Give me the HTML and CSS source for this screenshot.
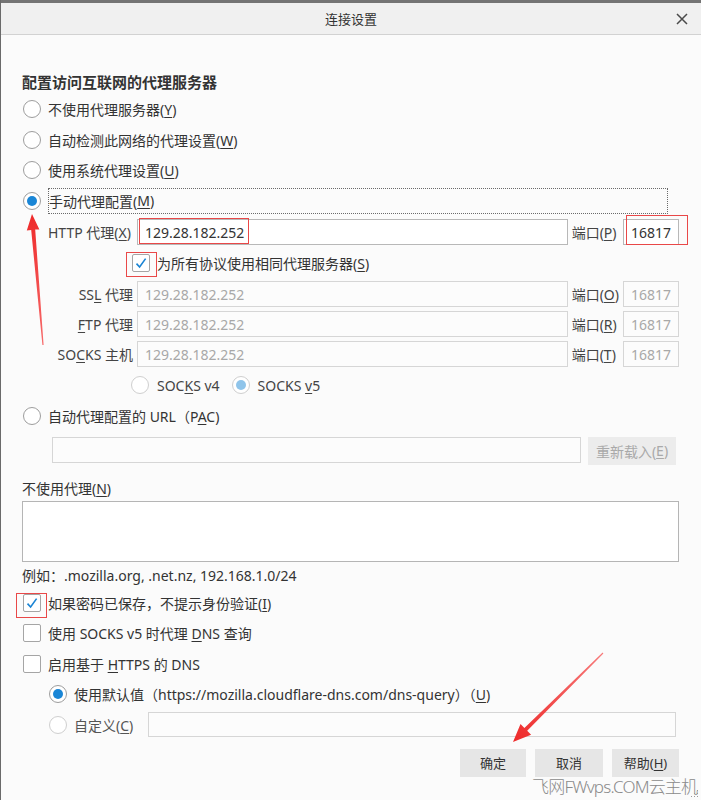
FILE: index.html
```html
<!DOCTYPE html>
<html lang="zh-CN">
<head>
<meta charset="utf-8">
<title>连接设置</title>
<link rel="stylesheet" href="styles.css">
</head>
<body>
<div class="window">
  <div class="titlebar">
    <span></span>
    <span class="title">连接设置</span>
    <svg class="close" width="12" height="12" viewBox="0 0 12 12"><path d="M1 1L11 11M11 1L1 11" stroke="#4a4a4a" stroke-width="1.5" fill="none"/></svg>
  </div>
  <div class="content">
    <h1 class="heading">配置访问互联网的代理服务器</h1>
    <div class="opt"><span class="radio"></span><span>不使用代理服务器(<u>Y</u>)</span></div>
    <div class="opt"><span class="radio"></span><span>自动检测此网络的代理设置(<u>W</u>)</span></div>
    <div class="opt"><span class="radio"></span><span>使用系统代理设置(<u>U</u>)</span></div>
    <div class="opt"><span class="radio on"></span><span class="focus">手动代理配置(<u>M</u>)</span></div>

    <div class="proxy-grid">
      <span class="lbl http">HTTP 代理(<u>X</u>)</span>
      <div class="field"><span>129.28.182.252</span><span class="redbox ip-box"></span></div>
      <span class="plbl">端口(<u>P</u>)</span>
      <div class="field"><span>16817</span><span class="redbox port-box"></span></div>

      <div class="same-row">
        <span class="check"><svg width="16" height="16" viewBox="0 0 16 16"><path d="M3.5 8.6L6.6 12L12.6 3.6" stroke="#1a84d4" stroke-width="1.6" fill="none"/></svg><span class="redbox chk-box"></span></span>
        <span>为所有协议使用相同代理服务器(<u>S</u>)</span>
      </div>

      <span class="lbl">SS<u>L</u> 代理</span>
      <div class="field off"><span>129.28.182.252</span></div>
      <span class="plbl">端口(<u>O</u>)</span>
      <div class="field off"><span>16817</span></div>

      <span class="lbl"><u>F</u>TP 代理</span>
      <div class="field off"><span>129.28.182.252</span></div>
      <span class="plbl">端口(<u>R</u>)</span>
      <div class="field off"><span>16817</span></div>

      <span class="lbl">SO<u>C</u>KS 主机</span>
      <div class="field off"><span>129.28.182.252</span></div>
      <span class="plbl">端口(<u>T</u>)</span>
      <div class="field off"><span>16817</span></div>
    </div>

    <div class="socks-row">
      <span class="radio dis"></span><span class="sv">SOC<u>K</u>S v4</span>
      <span class="radio dis on"></span><span class="sv">SOCKS <u>v</u>5</span>
    </div>

    <div class="opt pac"><span class="radio"></span><span>自动代理配置的 URL（P<u>A</u>C)</span></div>
    <div class="pac-row">
      <div class="field off grow"></div>
      <span class="btn dis">重新载入(<u>E</u>)</span>
    </div>

    <div class="plain noproxy">不使用代理(<u>N</u>)</div>
    <div class="textarea"></div>
    <div class="plain example">例如：.mozilla.org, .net.nz, 192.168.1.0/24</div>

    <div class="opt first-check"><span class="check"><svg width="16" height="16" viewBox="0 0 16 16"><path d="M3.5 8.6L6.6 12L12.6 3.6" stroke="#1a84d4" stroke-width="1.6" fill="none"/></svg><span class="redbox chk-box2"></span></span><span>如果密码已保存，不提示身份验证(<u>I</u>)</span></div>
    <div class="opt"><span class="check"></span><span>使用 SOCKS v5 时代理 <u>D</u>NS 查询</span></div>
    <div class="opt"><span class="check"></span><span>启用基于 <u>H</u>TTPS 的 DNS</span></div>

    <div class="opt sub"><span class="radio on"></span><span>使用默认值（https://mozilla.cloudflare-dns.com/dns-query）（<u>U</u>)</span></div>
    <div class="opt sub"><span class="radio dis"></span><span class="custom-lbl">自定义(<u>C</u>)</span><div class="field off custom"></div></div>

    <div class="buttons">
      <span class="btn ok">确定</span>
      <span class="btn cancel">取消</span>
      <span class="btn help">帮助(<u>H</u>)</span>
    </div>
  </div>

  <div class="watermark">飞网FWvps.COM云主机</div>

  <svg class="annot" width="701" height="800" viewBox="0 0 701 800">
    <defs>
      <linearGradient id="g1" x1="32" y1="215" x2="43" y2="345" gradientUnits="userSpaceOnUse">
        <stop offset="0" stop-color="#ee2a2a"/>
        <stop offset="1" stop-color="#f76a6a"/>
      </linearGradient>
      <linearGradient id="g2" x1="513" y1="742" x2="603" y2="653" gradientUnits="userSpaceOnUse">
        <stop offset="0" stop-color="#ee2a2a"/>
        <stop offset="1" stop-color="#f77a7a"/>
      </linearGradient>
    </defs>
    <polygon points="32,214 39.4,229.6 35.2,229.6 43.6,345 42.4,345 31.2,230 26.8,230.4" fill="url(#g1)"/>
    <polygon points="513,742 531.1,734.7 527.2,730.7 603.4,653.4 602.6,652.6 524.4,727.9 520.5,723.9" fill="url(#g2)"/>
    <g fill="#9a9a9a">
      <rect x="697" y="790" width="1" height="1"/>
      <rect x="694" y="793" width="1" height="1"/>
      <rect x="697" y="793" width="1" height="1"/>
      <rect x="691" y="796" width="1" height="1"/>
      <rect x="694" y="796" width="1" height="1"/>
      <rect x="697" y="796" width="1" height="1"/>
    </g>
  </svg>
</div>
</body>
</html>
```

FILE: styles.css
```css
* { box-sizing: border-box; }
html, body { margin: 0; padding: 0; }
body {
  background: #fbfbfb;
  font-family: "Noto Sans", "Noto Sans CJK SC", sans-serif;
  font-size: 14px;
  color: #333;
}
u { text-decoration: underline; text-underline-offset: 2px; }

.window {
  position: relative;
  width: 701px;
  height: 800px;
  overflow: hidden;
  border-left: 1px solid #6a6a6a;
  background: #fbfbfb;
}

.titlebar {
  height: 35px;
  border-top: 3px solid #747474;
  border-bottom: 1px solid #d2d2d2;
  background: #f0f0f0;
  display: grid;
  grid-template-columns: 1fr auto 1fr;
  align-items: center;
}
.title { font-size: 13px; color: #333; }
.close { justify-self: end; margin-right: 13px; }

.content { padding: 0 22px 0 21px; }

.heading {
  margin: 37px 0 2px;
  font-size: 15px;
  line-height: 20px;
  font-weight: bold;
  color: #333;
}

.opt {
  display: flex;
  align-items: center;
  height: 30.5px;
  gap: 7px;
  white-space: nowrap;
}
.radio {
  flex: none;
  width: 18px;
  height: 18px;
  margin-left: 1px;
  border: 1px solid #9d9d9d;
  border-radius: 50%;
  background: #fff;
  display: grid;
  place-items: center;
}
.radio.on::after {
  content: "";
  width: 10px;
  height: 10px;
  border-radius: 50%;
  background: #1a86d6;
}
.radio.dis { border-color: #cfcfcf; }
.radio.dis.on::after { background: #8fc4ea; }

.focus {
  flex: 1;
  height: 26px;
  margin-right: 11px;
  border: 1px dotted #6a6a6a;
  display: flex;
  align-items: center;
}

.proxy-grid {
  margin-top: 3px;
  padding-left: 26px;
  display: grid;
  grid-template-columns: 85px 1fr auto 56px;
  grid-template-rows: 26px 28px 26px 26px 26px;
  column-gap: 4px;
  row-gap: 4px;
  align-items: center;
  color: #444;
}
.lbl { justify-self: end; white-space: nowrap; }
.lbl.http { justify-self: start; }
.plbl { white-space: nowrap; }

.field {
  position: relative;
  height: 26px;
  border: 1px solid #b8b8b8;
  background: #fff;
  display: flex;
  align-items: center;
  padding: 0 7px;
  color: #333;
  white-space: nowrap;
}
.field.off {
  border-color: #d6d6d6;
  background: #fcfcfc;
  color: #a8a8a8;
}

.redbox {
  position: absolute;
  border: 1px solid #e94848;
  pointer-events: none;
}
.ip-box { left: 1px; top: -2px; width: 110px; height: 26px; }
.port-box { left: 2px; top: -5px; width: 62px; height: 30px; }
.chk-box { left: -7px; top: -3px; width: 31px; height: 25px; }
.chk-box2 { left: -8px; top: -2px; width: 31px; height: 25px; }

.same-row {
  grid-column: 1 / -1;
  display: flex;
  align-items: center;
  gap: 7px;
  padding-left: 83px;
  color: #333;
}

.check {
  position: relative;
  flex: none;
  width: 18px;
  height: 18px;
  margin-left: 1px;
  border: 1px solid #a5a5a5;
  border-radius: 2px;
  background: #fff;
  display: grid;
  place-items: center;
}

.socks-row {
  margin-top: 4px;
  height: 28px;
  padding-left: 109px;
  display: flex;
  align-items: center;
  color: #444;
}
.socks-row .radio { margin-left: 0; }
.sv { margin-left: 8px; margin-right: 12px; }

.pac { margin-top: 2px; }
.pac-row {
  margin-top: 5px;
  padding-left: 30px;
  padding-right: 3px;
  display: flex;
  align-items: flex-start;
  gap: 7px;
}
.grow { flex: 1; }

.btn {
  display: flex;
  align-items: center;
  justify-content: center;
  height: 28px;
  background: #e6e6e6;
  font-size: 13px;
  color: #333;
  white-space: nowrap;
}
.btn.dis { width: 88px; background: #ececec; color: #a9a9a9; font-size: 14px; }

.plain { line-height: 20px; white-space: nowrap; }
.noproxy { margin-top: 14px; }
.textarea {
  margin-top: 2px;
  height: 61px;
  border: 1px solid #b5b5b5;
  background: #fff;
}
.example { margin-top: 4px; }

.first-check { margin-top: 2px; }
.sub { padding-left: 26px; }
.custom-lbl { color: #555; }
.custom { flex: 1; height: 25px; margin-left: 8px; margin-right: 3px; }

.buttons {
  margin-top: 8.5px;
  display: flex;
  justify-content: flex-end;
  gap: 9px;
}
.ok { width: 66px; }
.cancel { width: 68px; }
.help { width: 67px; }

.watermark {
  position: absolute;
  left: 531px;
  top: 773px;
  font-size: 17px;
  letter-spacing: -0.8px;
  font-weight: 300;
  color: #8a8a8a;
  white-space: nowrap;
  font-family: "Noto Sans", "Noto Sans CJK SC", sans-serif;
}

.annot {
  position: absolute;
  left: -1px;
  top: 0;
  pointer-events: none;
}
```
